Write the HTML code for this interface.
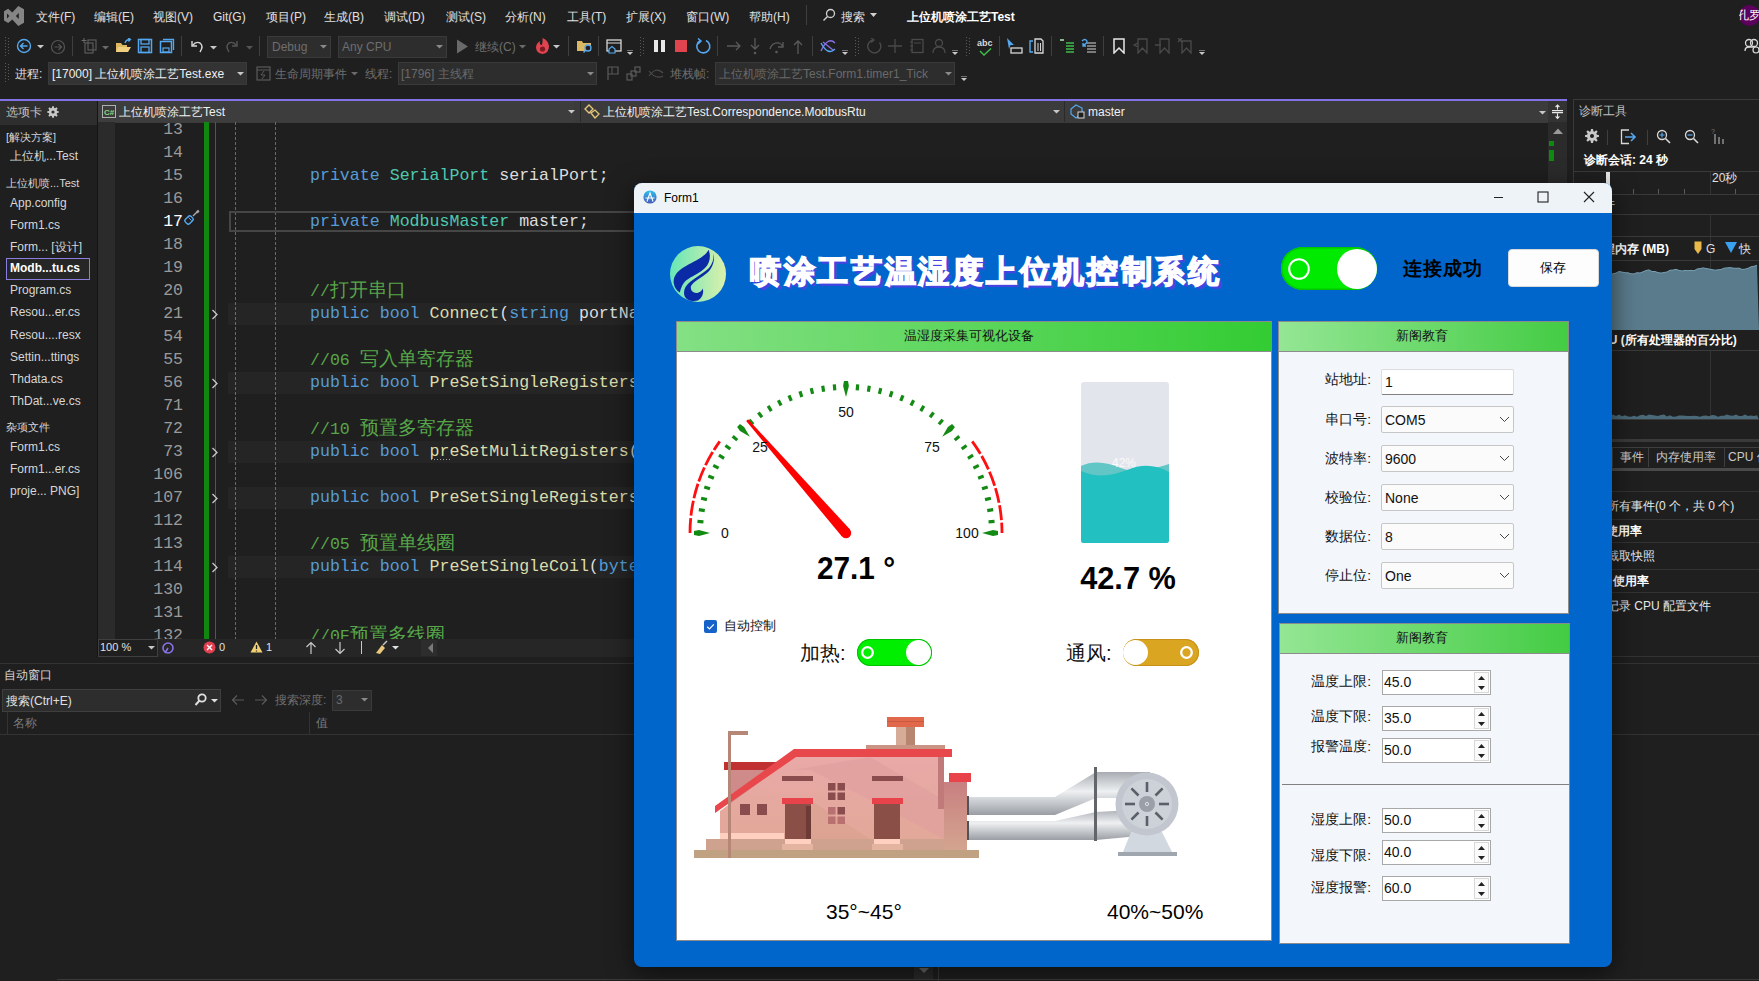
<!DOCTYPE html><html><head><meta charset="utf-8"><style>
html,body{margin:0;padding:0;}
body{width:1759px;height:981px;overflow:hidden;position:relative;background:#1f1f1f;font-family:"Liberation Sans",sans-serif;}
.t{position:absolute;white-space:nowrap;}
.m{font-family:"Liberation Mono",monospace;}
.cj{font-size:18.7px;}
</style></head><body>
<svg style="position:absolute;left:0px;top:0px;" width="28" height="30" viewBox="0 0 28 30"><path d="M4 11.3 L8.2 8.8 L12.3 12.6 L18.3 5.9 L24 9.2 V22.8 L18.3 26.1 L12.3 19.6 L8.2 23 L4 20.5 Z M7 13.6 V18.4 L9.3 16 Z M18.8 13 L15.9 16 L18.8 19 Z" fill="#858585" fill-rule="evenodd"/></svg>
<div class="t " style="left:36px;top:9.6px;font-size:12px;line-height:14.4px;color:#e0e0e0;font-weight:normal;">文件(F)</div>
<div class="t " style="left:94px;top:9.6px;font-size:12px;line-height:14.4px;color:#e0e0e0;font-weight:normal;">编辑(E)</div>
<div class="t " style="left:153px;top:9.6px;font-size:12px;line-height:14.4px;color:#e0e0e0;font-weight:normal;">视图(V)</div>
<div class="t " style="left:213px;top:9.6px;font-size:12px;line-height:14.4px;color:#e0e0e0;font-weight:normal;">Git(G)</div>
<div class="t " style="left:266px;top:9.6px;font-size:12px;line-height:14.4px;color:#e0e0e0;font-weight:normal;">项目(P)</div>
<div class="t " style="left:324px;top:9.6px;font-size:12px;line-height:14.4px;color:#e0e0e0;font-weight:normal;">生成(B)</div>
<div class="t " style="left:384px;top:9.6px;font-size:12px;line-height:14.4px;color:#e0e0e0;font-weight:normal;">调试(D)</div>
<div class="t " style="left:446px;top:9.6px;font-size:12px;line-height:14.4px;color:#e0e0e0;font-weight:normal;">测试(S)</div>
<div class="t " style="left:505px;top:9.6px;font-size:12px;line-height:14.4px;color:#e0e0e0;font-weight:normal;">分析(N)</div>
<div class="t " style="left:567px;top:9.6px;font-size:12px;line-height:14.4px;color:#e0e0e0;font-weight:normal;">工具(T)</div>
<div class="t " style="left:626px;top:9.6px;font-size:12px;line-height:14.4px;color:#e0e0e0;font-weight:normal;">扩展(X)</div>
<div class="t " style="left:686px;top:9.6px;font-size:12px;line-height:14.4px;color:#e0e0e0;font-weight:normal;">窗口(W)</div>
<div class="t " style="left:749px;top:9.6px;font-size:12px;line-height:14.4px;color:#e0e0e0;font-weight:normal;">帮助(H)</div>
<div style="position:absolute;left:806px;top:5px;width:1px;height:20px;background:#3f3f3f"></div>
<svg style="position:absolute;left:822px;top:8px;" width="14" height="14" viewBox="0 0 14 14"><circle cx="8.5" cy="5.5" r="4" fill="none" stroke="#d0d0d0" stroke-width="1.3"/><path d="M5.5 8.5 L1.5 12.5" stroke="#d0d0d0" stroke-width="1.5"/></svg>
<div class="t " style="left:841px;top:9.6px;font-size:12px;line-height:14.4px;color:#e0e0e0;font-weight:normal;">搜索</div>
<svg style="position:absolute;left:870px;top:13px;" width="8" height="5" viewBox="0 0 8 5"><path d="M0 0 H7 L3.5 4 Z" fill="#d0d0d0"/></svg>
<div class="t " style="left:907px;top:9.6px;font-size:12px;line-height:14.4px;color:#ffffff;font-weight:bold;">上位机喷涂工艺Test</div>
<div style="position:absolute;left:1739px;top:5px;width:21px;height:21px;border-radius:50%;background:#5c005e;overflow:hidden"><div class="t" style="left:-2px;top:2px;font-size:12px;line-height:16px;color:#fff">孔罗</div></div>
<svg style="position:absolute;left:5px;top:37px;" width="5" height="19" viewBox="0 0 5 19"><rect x="0" y="0" width="1" height="1" fill="#5a5a5a"/><rect x="3" y="1" width="1" height="1" fill="#5a5a5a"/><rect x="0" y="3" width="1" height="1" fill="#5a5a5a"/><rect x="3" y="4" width="1" height="1" fill="#5a5a5a"/><rect x="0" y="6" width="1" height="1" fill="#5a5a5a"/><rect x="3" y="7" width="1" height="1" fill="#5a5a5a"/><rect x="0" y="9" width="1" height="1" fill="#5a5a5a"/><rect x="3" y="10" width="1" height="1" fill="#5a5a5a"/><rect x="0" y="12" width="1" height="1" fill="#5a5a5a"/><rect x="3" y="13" width="1" height="1" fill="#5a5a5a"/><rect x="0" y="15" width="1" height="1" fill="#5a5a5a"/><rect x="3" y="16" width="1" height="1" fill="#5a5a5a"/><rect x="0" y="18" width="1" height="1" fill="#5a5a5a"/><rect x="3" y="19" width="1" height="1" fill="#5a5a5a"/></svg>
<svg style="position:absolute;left:16px;top:38px;" width="16" height="16" viewBox="0 0 16 16"><circle cx="8" cy="8" r="6.5" fill="none" stroke="#55a8f0" stroke-width="1.4"/><path d="M11.5 8 H4.5 M7.5 5 L4.5 8 L7.5 11" fill="none" stroke="#55a8f0" stroke-width="1.4"/></svg>
<svg style="position:absolute;left:37px;top:45px;" width="8" height="5" viewBox="0 0 8 5"><path d="M0 0 H7 L3.5 3.5 Z" fill="#c8c8c8"/></svg>
<svg style="position:absolute;left:50px;top:39px;" width="16" height="16" viewBox="0 0 16 16"><circle cx="8" cy="8" r="6.5" fill="none" stroke="#555" stroke-width="1.2"/><path d="M4.5 8 H11.5 M8.5 5 L11.5 8 L8.5 11" fill="none" stroke="#555" stroke-width="1.2"/></svg>
<div style="position:absolute;left:72px;top:36px;width:1px;height:20px;background:#3f3f3f"></div>
<svg style="position:absolute;left:81px;top:37px;" width="18" height="18" viewBox="0 0 18 18"><rect x="4" y="6" width="8" height="10" fill="none" stroke="#5a5a5a" stroke-width="1.2"/><rect x="7" y="3" width="8" height="10" fill="none" stroke="#5a5a5a" stroke-width="1.2"/><path d="M3 1 V6 M0.5 3.5 H5.5" stroke="#6a6a6a"/></svg>
<svg style="position:absolute;left:102px;top:46px;" width="8" height="5" viewBox="0 0 8 5"><path d="M0 0 H7 L3.5 3.5 Z" fill="#6a6a6a"/></svg>
<svg style="position:absolute;left:115px;top:38px;" width="17" height="16" viewBox="0 0 17 16"><path d="M1 5 H6 L7.5 7 H12 V14 H1 Z" fill="#dcb862"/><path d="M3 9 H16 L13 14 H1 Z" fill="#f0cf80"/><path d="M10 5 Q11 1.5 15 1.5 M13 0 L15.5 1.5 L13.5 3.5" fill="none" stroke="#55a8f0" stroke-width="1.3"/></svg>
<svg style="position:absolute;left:137px;top:38px;" width="16" height="16" viewBox="0 0 16 16"><rect x="1.5" y="1.5" width="13" height="13" fill="none" stroke="#55a8f0" stroke-width="1.5"/><rect x="4" y="1.5" width="8" height="4.5" fill="none" stroke="#55a8f0" stroke-width="1.3"/><rect x="4" y="9" width="8" height="5.5" fill="none" stroke="#55a8f0" stroke-width="1.3"/></svg>
<svg style="position:absolute;left:159px;top:38px;" width="16" height="16" viewBox="0 0 16 16"><rect x="1.5" y="3.5" width="11" height="11" fill="none" stroke="#55a8f0" stroke-width="1.5"/><path d="M4 1.5 H14.5 V12" fill="none" stroke="#55a8f0" stroke-width="1.3"/><rect x="4" y="10" width="6" height="4" fill="none" stroke="#55a8f0" stroke-width="1.2"/></svg>
<div style="position:absolute;left:181px;top:36px;width:1px;height:20px;background:#3f3f3f"></div>
<svg style="position:absolute;left:189px;top:38px;" width="16" height="16" viewBox="0 0 16 16"><path d="M3 3 V8 H8" fill="none" stroke="#d8d8d8" stroke-width="1.4"/><path d="M3.5 7.5 Q7 3 11 5 Q15 8 11 14" fill="none" stroke="#d8d8d8" stroke-width="1.4"/></svg>
<svg style="position:absolute;left:210px;top:46px;" width="8" height="5" viewBox="0 0 8 5"><path d="M0 0 H7 L3.5 3.5 Z" fill="#c8c8c8"/></svg>
<svg style="position:absolute;left:224px;top:38px;" width="16" height="16" viewBox="0 0 16 16"><path d="M13 3 V8 H8" fill="none" stroke="#555" stroke-width="1.4"/><path d="M12.5 7.5 Q9 3 5 5 Q1 8 5 14" fill="none" stroke="#555" stroke-width="1.4"/></svg>
<svg style="position:absolute;left:246px;top:46px;" width="8" height="5" viewBox="0 0 8 5"><path d="M0 0 H7 L3.5 3.5 Z" fill="#555"/></svg>
<div style="position:absolute;left:259px;top:36px;width:1px;height:20px;background:#3f3f3f"></div>
<div style="position:absolute;left:267px;top:36px;width:64px;height:22px;background:#2d2d2d;border:1px solid #3a3a3a;box-sizing:border-box"></div>
<div class="t " style="left:272px;top:39.8px;font-size:12px;line-height:14.4px;color:#6e6e6e;font-weight:normal;">Debug</div>
<svg style="position:absolute;left:320px;top:45px;" width="8" height="5" viewBox="0 0 8 5"><path d="M0 0 H7 L3.5 3.5 Z" fill="#8a8a8a"/></svg>
<div style="position:absolute;left:338px;top:36px;width:109px;height:22px;background:#2d2d2d;border:1px solid #3a3a3a;box-sizing:border-box"></div>
<div class="t " style="left:342px;top:39.8px;font-size:12px;line-height:14.4px;color:#6e6e6e;font-weight:normal;">Any CPU</div>
<svg style="position:absolute;left:436px;top:45px;" width="8" height="5" viewBox="0 0 8 5"><path d="M0 0 H7 L3.5 3.5 Z" fill="#8a8a8a"/></svg>
<svg style="position:absolute;left:456px;top:39px;" width="14" height="15" viewBox="0 0 14 15"><path d="M1 0.5 L12 7.5 L1 14.5 Z" fill="#6a6a6a"/></svg>
<div class="t " style="left:475px;top:39.8px;font-size:12px;line-height:14.4px;color:#6e6e6e;font-weight:normal;">继续(C)</div>
<svg style="position:absolute;left:519px;top:45px;" width="8" height="5" viewBox="0 0 8 5"><path d="M0 0 H7 L3.5 3.5 Z" fill="#6a6a6a"/></svg>
<svg style="position:absolute;left:534px;top:37px;" width="17" height="18" viewBox="0 0 17 18"><path d="M8.5 1 Q14 3 15 9 Q15 16 8.5 17 Q2 16 2 10 Q2.5 6 6 4 Q5 8 8 8 Q9 4 8.5 1 Z" fill="#e0454f"/><circle cx="8.5" cy="12" r="2.6" fill="#7a1a22"/></svg>
<svg style="position:absolute;left:553px;top:45px;" width="8" height="5" viewBox="0 0 8 5"><path d="M0 0 H7 L3.5 3.5 Z" fill="#c8c8c8"/></svg>
<div style="position:absolute;left:568px;top:36px;width:1px;height:20px;background:#3f3f3f"></div>
<svg style="position:absolute;left:576px;top:38px;" width="17" height="16" viewBox="0 0 17 16"><path d="M1 3 H6 L7 5 H15 V13 H1 Z" fill="#dcb862"/><circle cx="12" cy="10" r="3" fill="#1f1f1f" stroke="#55a8f0" stroke-width="1.3"/><path d="M10 12 L7.5 14.5" stroke="#55a8f0" stroke-width="1.5"/></svg>
<div style="position:absolute;left:598px;top:36px;width:1px;height:20px;background:#3f3f3f"></div>
<svg style="position:absolute;left:606px;top:38px;" width="16" height="16" viewBox="0 0 16 16"><rect x="1" y="2" width="14" height="11" fill="none" stroke="#d8d8d8" stroke-width="1.3"/><path d="M1 5 H15" stroke="#d8d8d8"/><path d="M3 15 V11 L6 8.5 L9 11 V15 Z" fill="#1f1f1f" stroke="#55a8f0" stroke-width="1.2"/></svg>
<svg style="position:absolute;left:627px;top:50px;" width="7" height="6" viewBox="0 0 7 6"><path d="M0 0 H6" stroke="#c8c8c8"/><path d="M0 2 H6 L3 5 Z" fill="#c8c8c8"/></svg>
<svg style="position:absolute;left:640px;top:37px;" width="5" height="19" viewBox="0 0 5 19"><rect x="0" y="0" width="1" height="1" fill="#5a5a5a"/><rect x="3" y="1" width="1" height="1" fill="#5a5a5a"/><rect x="0" y="3" width="1" height="1" fill="#5a5a5a"/><rect x="3" y="4" width="1" height="1" fill="#5a5a5a"/><rect x="0" y="6" width="1" height="1" fill="#5a5a5a"/><rect x="3" y="7" width="1" height="1" fill="#5a5a5a"/><rect x="0" y="9" width="1" height="1" fill="#5a5a5a"/><rect x="3" y="10" width="1" height="1" fill="#5a5a5a"/><rect x="0" y="12" width="1" height="1" fill="#5a5a5a"/><rect x="3" y="13" width="1" height="1" fill="#5a5a5a"/><rect x="0" y="15" width="1" height="1" fill="#5a5a5a"/><rect x="3" y="16" width="1" height="1" fill="#5a5a5a"/><rect x="0" y="18" width="1" height="1" fill="#5a5a5a"/><rect x="3" y="19" width="1" height="1" fill="#5a5a5a"/></svg>
<div style="position:absolute;left:654px;top:40px;width:4px;height:12px;background:#e8e8e8"></div>
<div style="position:absolute;left:661px;top:40px;width:4px;height:12px;background:#e8e8e8"></div>
<div style="position:absolute;left:675px;top:40px;width:12px;height:12px;background:#e0454f"></div>
<svg style="position:absolute;left:695px;top:38px;" width="17" height="16" viewBox="0 0 17 16"><path d="M11 2.5 A6.5 6.5 0 1 1 5 2.8" fill="none" stroke="#55a8f0" stroke-width="1.6"/><path d="M3 0.5 L6 3 L3 6" fill="none" stroke="#55a8f0" stroke-width="1.5"/></svg>
<div style="position:absolute;left:717px;top:36px;width:1px;height:20px;background:#3f3f3f"></div>
<svg style="position:absolute;left:726px;top:39px;" width="16" height="14" viewBox="0 0 16 14"><path d="M1 7 H14 M10 3 L14 7 L10 11" fill="none" stroke="#5a5a5a" stroke-width="1.3"/></svg>
<svg style="position:absolute;left:748px;top:37px;" width="14" height="18" viewBox="0 0 14 18"><path d="M7 1 V12 M3 8 L7 12 L11 8" fill="none" stroke="#5a5a5a" stroke-width="1.3"/><circle cx="7" cy="16" r="1.3" fill="#5a5a5a"/></svg>
<svg style="position:absolute;left:768px;top:39px;" width="18" height="16" viewBox="0 0 18 16"><path d="M2 10 Q4 3 11 4 Q14 5 15 8 M15 3 V8 H10" fill="none" stroke="#5a5a5a" stroke-width="1.3"/><circle cx="8.5" cy="13" r="1.3" fill="#5a5a5a"/></svg>
<svg style="position:absolute;left:791px;top:37px;" width="14" height="18" viewBox="0 0 14 18"><path d="M7 17 V4 M3 8 L7 4 L11 8" fill="none" stroke="#5a5a5a" stroke-width="1.3"/></svg>
<div style="position:absolute;left:812px;top:36px;width:1px;height:20px;background:#3f3f3f"></div>
<svg style="position:absolute;left:819px;top:38px;" width="18" height="16" viewBox="0 0 18 16"><path d="M2 13 Q9 -2 16 5" fill="none" stroke="#8a72e8" stroke-width="1.4"/><path d="M2 5 Q9 18 16 11" fill="none" stroke="#55a8f0" stroke-width="1.4"/><path d="M4 4 L14 12" stroke="#8a72e8" stroke-width="1.2"/></svg>
<svg style="position:absolute;left:842px;top:50px;" width="7" height="6" viewBox="0 0 7 6"><path d="M0 0 H6" stroke="#c8c8c8"/><path d="M0 2 H6 L3 5 Z" fill="#c8c8c8"/></svg>
<svg style="position:absolute;left:855px;top:37px;" width="5" height="19" viewBox="0 0 5 19"><rect x="0" y="0" width="1" height="1" fill="#5a5a5a"/><rect x="3" y="1" width="1" height="1" fill="#5a5a5a"/><rect x="0" y="3" width="1" height="1" fill="#5a5a5a"/><rect x="3" y="4" width="1" height="1" fill="#5a5a5a"/><rect x="0" y="6" width="1" height="1" fill="#5a5a5a"/><rect x="3" y="7" width="1" height="1" fill="#5a5a5a"/><rect x="0" y="9" width="1" height="1" fill="#5a5a5a"/><rect x="3" y="10" width="1" height="1" fill="#5a5a5a"/><rect x="0" y="12" width="1" height="1" fill="#5a5a5a"/><rect x="3" y="13" width="1" height="1" fill="#5a5a5a"/><rect x="0" y="15" width="1" height="1" fill="#5a5a5a"/><rect x="3" y="16" width="1" height="1" fill="#5a5a5a"/><rect x="0" y="18" width="1" height="1" fill="#5a5a5a"/><rect x="3" y="19" width="1" height="1" fill="#5a5a5a"/></svg>
<svg style="position:absolute;left:865px;top:38px;" width="17" height="17" viewBox="0 0 17 17"><path d="M14.5 4.5 A6.5 6.5 0 1 1 8 2" fill="none" stroke="#4a4a4a" stroke-width="1.4"/><path d="M6 0 L9 2 L6 4.5" fill="none" stroke="#4a4a4a" stroke-width="1.3"/></svg>
<svg style="position:absolute;left:887px;top:38px;" width="16" height="16" viewBox="0 0 16 16"><path d="M8 1 V15 M1 8 H15" stroke="#4a4a4a" stroke-width="1.3"/></svg>
<svg style="position:absolute;left:910px;top:38px;" width="15" height="16" viewBox="0 0 15 16"><rect x="2" y="1.5" width="11" height="13" fill="none" stroke="#4a4a4a" stroke-width="1.3"/><path d="M4 5 H11 M0 4 H3 M0 8 H3 M0 12 H3" stroke="#4a4a4a"/></svg>
<svg style="position:absolute;left:932px;top:38px;" width="14" height="16" viewBox="0 0 14 16"><circle cx="7" cy="5" r="3.5" fill="none" stroke="#4a4a4a" stroke-width="1.3"/><path d="M1 15 Q1 9 7 9 Q13 9 13 15" fill="none" stroke="#4a4a4a" stroke-width="1.3"/></svg>
<svg style="position:absolute;left:952px;top:50px;" width="7" height="6" viewBox="0 0 7 6"><path d="M0 0 H6" stroke="#c8c8c8"/><path d="M0 2 H6 L3 5 Z" fill="#c8c8c8"/></svg>
<svg style="position:absolute;left:966px;top:37px;" width="5" height="19" viewBox="0 0 5 19"><rect x="0" y="0" width="1" height="1" fill="#5a5a5a"/><rect x="3" y="1" width="1" height="1" fill="#5a5a5a"/><rect x="0" y="3" width="1" height="1" fill="#5a5a5a"/><rect x="3" y="4" width="1" height="1" fill="#5a5a5a"/><rect x="0" y="6" width="1" height="1" fill="#5a5a5a"/><rect x="3" y="7" width="1" height="1" fill="#5a5a5a"/><rect x="0" y="9" width="1" height="1" fill="#5a5a5a"/><rect x="3" y="10" width="1" height="1" fill="#5a5a5a"/><rect x="0" y="12" width="1" height="1" fill="#5a5a5a"/><rect x="3" y="13" width="1" height="1" fill="#5a5a5a"/><rect x="0" y="15" width="1" height="1" fill="#5a5a5a"/><rect x="3" y="16" width="1" height="1" fill="#5a5a5a"/><rect x="0" y="18" width="1" height="1" fill="#5a5a5a"/><rect x="3" y="19" width="1" height="1" fill="#5a5a5a"/></svg>
<div class="t " style="left:977px;top:37.6px;font-size:9px;line-height:10.8px;color:#d8d8d8;font-weight:bold;">abc</div>
<svg style="position:absolute;left:979px;top:48px;" width="14" height="8" viewBox="0 0 14 8"><path d="M1 3 L5 7 L12 0.5" fill="none" stroke="#3fba4a" stroke-width="1.5"/></svg>
<div style="position:absolute;left:999px;top:36px;width:1px;height:20px;background:#3f3f3f"></div>
<svg style="position:absolute;left:1006px;top:38px;" width="18" height="16" viewBox="0 0 18 16"><path d="M1 0 L8 7 H4.5 L3 11 Z" fill="#55a8f0"/><rect x="5" y="10" width="11" height="5" fill="none" stroke="#d8d8d8" stroke-width="1.3"/></svg>
<svg style="position:absolute;left:1028px;top:38px;" width="17" height="16" viewBox="0 0 17 16"><path d="M5 3 H2 V14 H5" fill="none" stroke="#55a8f0" stroke-width="1.4"/><path d="M7 1 H13 L15 3 V15 H7 Z" fill="none" stroke="#d8d8d8" stroke-width="1.3"/><path d="M10 5 V13 M12.5 5 V13" stroke="#d8d8d8"/></svg>
<div style="position:absolute;left:1051px;top:36px;width:1px;height:20px;background:#3f3f3f"></div>
<svg style="position:absolute;left:1059px;top:38px;" width="16" height="16" viewBox="0 0 16 16"><path d="M1 2 H5 M7 5 H15 M7 8 H15 M7 11 H15 M7 14 H15" stroke="#3fba4a" stroke-width="1.3"/><path d="M1 2 H5" stroke="#d8d8d8"/></svg>
<svg style="position:absolute;left:1080px;top:38px;" width="17" height="16" viewBox="0 0 17 16"><path d="M7 5 H16 M7 8 H16 M7 11 H16 M7 14 H16" stroke="#d8d8d8" stroke-width="1.2"/><path d="M2 3 Q5 0 7 3 Q7 6 3 7 M3 5 V8 H6" fill="none" stroke="#55a8f0" stroke-width="1.3"/></svg>
<div style="position:absolute;left:1103px;top:36px;width:1px;height:20px;background:#3f3f3f"></div>
<svg style="position:absolute;left:1112px;top:38px;" width="14" height="16" viewBox="0 0 14 16"><path d="M2 1 H12 V15 L7 10 L2 15 Z" fill="none" stroke="#e8e8e8" stroke-width="1.5"/></svg>
<svg style="position:absolute;left:1133px;top:38px;" width="16" height="16" viewBox="0 0 16 16"><path d="M5 1 H14 V15 L9.5 10 L5 15 Z M1 7 L5 5 V9 Z" fill="none" stroke="#4a4a4a" stroke-width="1.3"/></svg>
<svg style="position:absolute;left:1155px;top:38px;" width="16" height="16" viewBox="0 0 16 16"><path d="M5 1 H14 V15 L9.5 10 L5 15 Z M0 7 H6" fill="none" stroke="#4a4a4a" stroke-width="1.3"/></svg>
<svg style="position:absolute;left:1177px;top:38px;" width="16" height="16" viewBox="0 0 16 16"><path d="M5 3 H14 V15 L9.5 10 L5 15 Z M1 0 L5 4 M5 0 L1 4" fill="none" stroke="#4a4a4a" stroke-width="1.3"/></svg>
<svg style="position:absolute;left:1199px;top:50px;" width="7" height="6" viewBox="0 0 7 6"><path d="M0 0 H6" stroke="#c8c8c8"/><path d="M0 2 H6 L3 5 Z" fill="#c8c8c8"/></svg>
<svg style="position:absolute;left:1744px;top:38px;" width="15" height="16" viewBox="0 0 15 16"><circle cx="5" cy="5" r="3.5" fill="none" stroke="#d8d8d8" stroke-width="1.3"/><circle cx="10" cy="5" r="3.5" fill="none" stroke="#d8d8d8" stroke-width="1.3"/><path d="M1 13 Q1 9 5 9 H10 Q14 9 14 13" fill="none" stroke="#d8d8d8" stroke-width="1.3"/><circle cx="12" cy="12" r="3" fill="#1f1f1f" stroke="#d8d8d8" stroke-width="1.2"/></svg>
<svg style="position:absolute;left:5px;top:63px;" width="5" height="19" viewBox="0 0 5 19"><rect x="0" y="0" width="1" height="1" fill="#5a5a5a"/><rect x="3" y="1" width="1" height="1" fill="#5a5a5a"/><rect x="0" y="3" width="1" height="1" fill="#5a5a5a"/><rect x="3" y="4" width="1" height="1" fill="#5a5a5a"/><rect x="0" y="6" width="1" height="1" fill="#5a5a5a"/><rect x="3" y="7" width="1" height="1" fill="#5a5a5a"/><rect x="0" y="9" width="1" height="1" fill="#5a5a5a"/><rect x="3" y="10" width="1" height="1" fill="#5a5a5a"/><rect x="0" y="12" width="1" height="1" fill="#5a5a5a"/><rect x="3" y="13" width="1" height="1" fill="#5a5a5a"/><rect x="0" y="15" width="1" height="1" fill="#5a5a5a"/><rect x="3" y="16" width="1" height="1" fill="#5a5a5a"/><rect x="0" y="18" width="1" height="1" fill="#5a5a5a"/><rect x="3" y="19" width="1" height="1" fill="#5a5a5a"/></svg>
<div class="t " style="left:15px;top:66.8px;font-size:12px;line-height:14.4px;color:#e0e0e0;font-weight:normal;">进程:</div>
<div style="position:absolute;left:48px;top:62px;width:199px;height:23px;background:#333333;border:1px solid #3a3a3a;box-sizing:border-box"></div>
<div class="t " style="left:52px;top:66.8px;font-size:12px;line-height:14.4px;color:#f0f0f0;font-weight:normal;">[17000] 上位机喷涂工艺Test.exe</div>
<svg style="position:absolute;left:237px;top:72px;" width="8" height="5" viewBox="0 0 8 5"><path d="M0 0 H7 L3.5 3.5 Z" fill="#c8c8c8"/></svg>
<svg style="position:absolute;left:256px;top:66px;" width="15" height="15" viewBox="0 0 15 15"><rect x="1" y="1" width="13" height="13" fill="none" stroke="#5a5a5a" stroke-width="1.2"/><path d="M1 4 H14 M8 5 L5 9 H9 L6 13" fill="none" stroke="#5a5a5a"/></svg>
<div class="t " style="left:275px;top:66.8px;font-size:12px;line-height:14.4px;color:#6e6e6e;font-weight:normal;">生命周期事件</div>
<svg style="position:absolute;left:351px;top:72px;" width="8" height="5" viewBox="0 0 8 5"><path d="M0 0 H7 L3.5 3.5 Z" fill="#6a6a6a"/></svg>
<div class="t " style="left:365px;top:66.8px;font-size:12px;line-height:14.4px;color:#6e6e6e;font-weight:normal;">线程:</div>
<div style="position:absolute;left:398px;top:62px;width:199px;height:23px;background:#2d2d2d;border:1px solid #3a3a3a;box-sizing:border-box"></div>
<div class="t " style="left:401px;top:66.8px;font-size:12px;line-height:14.4px;color:#6a6a6a;font-weight:normal;">[1796] 主线程</div>
<svg style="position:absolute;left:587px;top:72px;" width="8" height="5" viewBox="0 0 8 5"><path d="M0 0 H7 L3.5 3.5 Z" fill="#8a8a8a"/></svg>
<svg style="position:absolute;left:606px;top:66px;" width="14" height="15" viewBox="0 0 14 15"><path d="M2 14 V1 H12 V8 H2" fill="none" stroke="#5a5a5a" stroke-width="1.2"/><path d="M6 1 V8" stroke="#5a5a5a"/></svg>
<svg style="position:absolute;left:626px;top:66px;" width="15" height="15" viewBox="0 0 15 15"><rect x="1" y="8" width="5" height="6" fill="none" stroke="#5a5a5a" stroke-width="1.2"/><rect x="5" y="5" width="5" height="5" fill="none" stroke="#5a5a5a" stroke-width="1.2"/><rect x="9" y="1" width="5" height="5" fill="none" stroke="#5a5a5a" stroke-width="1.2"/></svg>
<svg style="position:absolute;left:648px;top:68px;" width="16" height="11" viewBox="0 0 16 11"><path d="M1 8 Q8 -2 15 5 M1 3 Q8 12 15 8" fill="none" stroke="#4a4a4a" stroke-width="1.2"/></svg>
<div class="t " style="left:670px;top:66.8px;font-size:12px;line-height:14.4px;color:#6e6e6e;font-weight:normal;">堆栈帧:</div>
<div style="position:absolute;left:715px;top:62px;width:240px;height:23px;background:#2d2d2d;border:1px solid #3a3a3a;box-sizing:border-box"></div>
<div class="t " style="left:719px;top:66.8px;font-size:12px;line-height:14.4px;color:#6a6a6a;font-weight:normal;">上位机喷涂工艺Test.Form1.timer1_Tick</div>
<svg style="position:absolute;left:945px;top:72px;" width="8" height="5" viewBox="0 0 8 5"><path d="M0 0 H7 L3.5 3.5 Z" fill="#8a8a8a"/></svg>
<svg style="position:absolute;left:961px;top:76px;" width="7" height="6" viewBox="0 0 7 6"><path d="M0 0 H6" stroke="#c8c8c8"/><path d="M0 2 H6 L3 5 Z" fill="#c8c8c8"/></svg>
<div style="position:absolute;left:0px;top:99px;width:1567px;height:2px;background:#8272e8"></div>
<div style="position:absolute;left:0px;top:101px;width:97px;height:24px;background:#2e2e2e"></div>
<div class="t " style="left:6px;top:104.8px;font-size:12px;line-height:14.4px;color:#c0c0c0;font-weight:normal;">选项卡</div>
<svg style="position:absolute;left:47px;top:106px;" width="12" height="12" viewBox="0 0 12 12"><polygon points="10.05,4.88 11.73,5.13 11.73,6.87 10.05,7.12 9.65,8.07 10.67,9.44 9.44,10.67 8.07,9.65 7.12,10.05 6.87,11.73 5.13,11.73 4.88,10.05 3.93,9.65 2.56,10.67 1.33,9.44 2.35,8.07 1.95,7.12 0.27,6.87 0.27,5.13 1.95,4.88 2.35,3.93 1.33,2.56 2.56,1.33 3.93,2.35 4.88,1.95 5.13,0.27 6.87,0.27 7.12,1.95 8.07,2.35 9.44,1.33 10.67,2.56 9.65,3.93" fill="#c8c8c8"/><circle cx="6" cy="6" r="1.6" fill="#2e2e2e"/></svg>
<div style="position:absolute;left:97px;top:101px;width:1px;height:556px;background:#141414"></div>
<div style="position:absolute;left:6px;top:258px;width:84px;height:22px;border:1px solid #8a7ee0;background:#262626;box-sizing:border-box"></div>
<div class="t " style="left:6px;top:130.6px;font-size:11px;line-height:13.2px;color:#d6d6d6;font-weight:normal;">[解决方案]</div>
<div class="t " style="left:10px;top:149.0px;font-size:12px;line-height:14.4px;color:#d6d6d6;font-weight:normal;">上位机...Test</div>
<div class="t " style="left:6px;top:176.6px;font-size:11px;line-height:13.2px;color:#d6d6d6;font-weight:normal;">上位机喷...Test</div>
<div class="t " style="left:10px;top:196.0px;font-size:12px;line-height:14.4px;color:#d6d6d6;font-weight:normal;">App.config</div>
<div class="t " style="left:10px;top:218.0px;font-size:12px;line-height:14.4px;color:#d6d6d6;font-weight:normal;">Form1.cs</div>
<div class="t " style="left:10px;top:240.0px;font-size:12px;line-height:14.4px;color:#d6d6d6;font-weight:normal;">Form... [设计]</div>
<div class="t " style="left:10px;top:261.0px;font-size:12px;line-height:14.4px;color:#ffffff;font-weight:bold;">Modb...tu.cs</div>
<div class="t " style="left:10px;top:283.0px;font-size:12px;line-height:14.4px;color:#d6d6d6;font-weight:normal;">Program.cs</div>
<div class="t " style="left:10px;top:305.0px;font-size:12px;line-height:14.4px;color:#d6d6d6;font-weight:normal;">Resou...er.cs</div>
<div class="t " style="left:10px;top:328.0px;font-size:12px;line-height:14.4px;color:#d6d6d6;font-weight:normal;">Resou....resx</div>
<div class="t " style="left:10px;top:350.0px;font-size:12px;line-height:14.4px;color:#d6d6d6;font-weight:normal;">Settin...ttings</div>
<div class="t " style="left:10px;top:372.0px;font-size:12px;line-height:14.4px;color:#d6d6d6;font-weight:normal;">Thdata.cs</div>
<div class="t " style="left:10px;top:394.0px;font-size:12px;line-height:14.4px;color:#d6d6d6;font-weight:normal;">ThDat...ve.cs</div>
<div class="t " style="left:6px;top:420.6px;font-size:11px;line-height:13.2px;color:#d6d6d6;font-weight:normal;">杂项文件</div>
<div class="t " style="left:10px;top:440.0px;font-size:12px;line-height:14.4px;color:#d6d6d6;font-weight:normal;">Form1.cs</div>
<div class="t " style="left:10px;top:462.0px;font-size:12px;line-height:14.4px;color:#d6d6d6;font-weight:normal;">Form1...er.cs</div>
<div class="t " style="left:10px;top:484.0px;font-size:12px;line-height:14.4px;color:#d6d6d6;font-weight:normal;">proje... PNG]</div>
<div style="position:absolute;left:98px;top:101px;width:1469px;height:22px;background:#3b3b3b"></div>
<div style="position:absolute;left:98px;top:101px;width:476px;height:21px;background:#3d3d3d"></div>
<svg style="position:absolute;left:102px;top:105px;" width="14" height="13" viewBox="0 0 14 13"><rect x="0.5" y="0.5" width="13" height="12" fill="none" stroke="#b0b0b0"/><text x="2" y="10" font-size="8" fill="#8bd67a" font-family="Liberation Sans" font-weight="bold">C#</text></svg>
<div class="t " style="left:119px;top:104.8px;font-size:12px;line-height:14.4px;color:#f0f0f0;font-weight:normal;">上位机喷涂工艺Test</div>
<svg style="position:absolute;left:568px;top:110px;" width="8" height="5" viewBox="0 0 8 5"><path d="M0 0 H7 L3.5 3.5 Z" fill="#c8c8c8"/></svg>
<div style="position:absolute;left:580px;top:101px;width:1px;height:21px;background:#2a2a2a"></div>
<svg style="position:absolute;left:584px;top:104px;" width="16" height="15" viewBox="0 0 16 15"><path d="M1 5 L5 1 L9 5 L5 9 Z M7 9 L11 6 L15 10 L11 14 Z" fill="none" stroke="#e8c87a" stroke-width="1.3"/></svg>
<div class="t " style="left:603px;top:104.8px;font-size:12px;line-height:14.4px;color:#f0f0f0;font-weight:normal;">上位机喷涂工艺Test.Correspondence.ModbusRtu</div>
<svg style="position:absolute;left:1053px;top:110px;" width="8" height="5" viewBox="0 0 8 5"><path d="M0 0 H7 L3.5 3.5 Z" fill="#c8c8c8"/></svg>
<div style="position:absolute;left:1064px;top:101px;width:1px;height:21px;background:#2a2a2a"></div>
<svg style="position:absolute;left:1070px;top:104px;" width="16" height="15" viewBox="0 0 16 15"><path d="M1 5 L6 1 L12 4 V10 L6 14 L1 10 Z" fill="none" stroke="#55a8f0" stroke-width="1.2"/><rect x="8" y="8" width="6" height="6" fill="#1f1f1f" stroke="#d8d8d8"/></svg>
<div class="t " style="left:1088px;top:104.8px;font-size:12px;line-height:14.4px;color:#f0f0f0;font-weight:normal;">master</div>
<svg style="position:absolute;left:1539px;top:111px;" width="8" height="5" viewBox="0 0 8 5"><path d="M0 0 H7 L3.5 3.5 Z" fill="#c8c8c8"/></svg>
<div style="position:absolute;left:1548px;top:101px;width:19px;height:21px;background:#333333"></div>
<svg style="position:absolute;left:1550px;top:102px;" width="15" height="19" viewBox="0 0 15 19"><path d="M2 8.6 H13 M2 10.6 H13 M7.5 3 V7.6 M7.5 11.6 V16.4 M5.6 5 L7.5 3 L9.4 5 M5.6 14.4 L7.5 16.4 L9.4 14.4" fill="none" stroke="#e8e8e8" stroke-width="1.1"/></svg>
<div style="position:absolute;left:98px;top:122px;width:17px;height:517px;background:#2b2b2b"></div>
<div style="position:absolute;left:1548px;top:122px;width:19px;height:517px;background:#2b2b2b"></div>
<svg style="position:absolute;left:1553px;top:128px;" width="10" height="7" viewBox="0 0 10 7"><path d="M0 6 L5 0.5 L10 6 Z" fill="#9a9a9a"/></svg>
<div style="position:absolute;left:1549px;top:141px;width:5px;height:5px;background:#0e8a0e"></div>
<div style="position:absolute;left:1549px;top:150px;width:5px;height:11px;background:#0e8a0e"></div>
<div style="position:absolute;left:204px;top:122px;width:5px;height:517px;background:#108810"></div>
<div style="position:absolute;left:215px;top:122px;width:1px;height:517px;background:#555555"></div>
<div style="position:absolute;left:235px;top:122px;width:1px;height:517px;background:repeating-linear-gradient(#6a6a6a 0 3px, transparent 3px 5px)"></div>
<div style="position:absolute;left:275px;top:122px;width:1px;height:517px;background:repeating-linear-gradient(#6a6a6a 0 3px, transparent 3px 5px)"></div>
<div style="position:absolute;left:98px;top:122px;width:1450px;height:517px;overflow:hidden">
<div class="t m" style="right:1365px;top:-2px;font-size:16.5px;line-height:20px;color:#9a9a9a">13</div>
<div class="t m" style="right:1365px;top:21px;font-size:16.5px;line-height:20px;color:#9a9a9a">14</div>
<div class="t m" style="right:1365px;top:44px;font-size:16.5px;line-height:20px;color:#9a9a9a">15</div>
<div class="t m" style="left:212px;top:44px;font-size:16.6px;line-height:20px;color:#dcdcdc"><span style="color:#569cd6">private</span> <span style="color:#4ec9b0">SerialPort</span> serialPort;</div>
<div class="t m" style="right:1365px;top:67px;font-size:16.5px;line-height:20px;color:#9a9a9a">16</div>
<div style="position:absolute;left:131px;top:89px;width:1400px;height:21px;border:2px solid #464646;box-sizing:border-box"></div>
<div class="t m" style="right:1365px;top:90px;font-size:16.5px;line-height:20px;color:#ffffff">17</div>
<div class="t m" style="left:212px;top:90px;font-size:16.6px;line-height:20px;color:#dcdcdc"><span style="color:#569cd6">private</span> <span style="color:#4ec9b0">ModbusMaster</span> master;</div>
<div class="t m" style="right:1365px;top:113px;font-size:16.5px;line-height:20px;color:#9a9a9a">18</div>
<div class="t m" style="right:1365px;top:136px;font-size:16.5px;line-height:20px;color:#9a9a9a">19</div>
<div class="t m" style="right:1365px;top:159px;font-size:16.5px;line-height:20px;color:#9a9a9a">20</div>
<div class="t m" style="left:212px;top:159px;font-size:16.6px;line-height:20px;color:#dcdcdc"><span style="color:#57a64a">//<span class="cj">打开串口</span></span></div>
<div style="position:absolute;left:130px;top:181px;width:1400px;height:22px;background:rgba(255,255,255,0.028)"></div>
<svg style="position:absolute;left:113px;top:187px" width="8" height="11"><path d="M1.5 1 L6 5.5 L1.5 10" fill="none" stroke="#c8c8c8" stroke-width="1.3"/></svg>
<div class="t m" style="right:1365px;top:182px;font-size:16.5px;line-height:20px;color:#9a9a9a">21</div>
<div class="t m" style="left:212px;top:182px;font-size:16.6px;line-height:20px;color:#dcdcdc"><span style="color:#569cd6">public</span> <span style="color:#569cd6">bool</span> <span style="color:#dcdcaa">Connect</span>(<span style="color:#569cd6">string</span> portName</div>
<div class="t m" style="right:1365px;top:205px;font-size:16.5px;line-height:20px;color:#9a9a9a">54</div>
<div class="t m" style="right:1365px;top:228px;font-size:16.5px;line-height:20px;color:#9a9a9a">55</div>
<div class="t m" style="left:212px;top:228px;font-size:16.6px;line-height:20px;color:#dcdcdc"><span style="color:#57a64a">//06 <span class="cj">写入单寄存器</span></span></div>
<div style="position:absolute;left:130px;top:250px;width:1400px;height:22px;background:rgba(255,255,255,0.028)"></div>
<svg style="position:absolute;left:113px;top:256px" width="8" height="11"><path d="M1.5 1 L6 5.5 L1.5 10" fill="none" stroke="#c8c8c8" stroke-width="1.3"/></svg>
<div class="t m" style="right:1365px;top:251px;font-size:16.5px;line-height:20px;color:#9a9a9a">56</div>
<div class="t m" style="left:212px;top:251px;font-size:16.6px;line-height:20px;color:#dcdcdc"><span style="color:#569cd6">public</span> <span style="color:#569cd6">bool</span> <span style="color:#dcdcaa">PreSetSingleRegisters</span></div>
<div class="t m" style="right:1365px;top:274px;font-size:16.5px;line-height:20px;color:#9a9a9a">71</div>
<div class="t m" style="right:1365px;top:297px;font-size:16.5px;line-height:20px;color:#9a9a9a">72</div>
<div class="t m" style="left:212px;top:297px;font-size:16.6px;line-height:20px;color:#dcdcdc"><span style="color:#57a64a">//10 <span class="cj">预置多寄存器</span></span></div>
<div style="position:absolute;left:130px;top:319px;width:1400px;height:22px;background:rgba(255,255,255,0.028)"></div>
<svg style="position:absolute;left:113px;top:325px" width="8" height="11"><path d="M1.5 1 L6 5.5 L1.5 10" fill="none" stroke="#c8c8c8" stroke-width="1.3"/></svg>
<div class="t m" style="right:1365px;top:320px;font-size:16.5px;line-height:20px;color:#9a9a9a">73</div>
<div class="t m" style="left:212px;top:320px;font-size:16.6px;line-height:20px;color:#dcdcdc"><span style="color:#569cd6">public</span> <span style="color:#569cd6">bool</span> <span style="color:#dcdcaa">preSetMulitRegisters</span>(</div>
<div class="t m" style="right:1365px;top:343px;font-size:16.5px;line-height:20px;color:#9a9a9a">106</div>
<div style="position:absolute;left:130px;top:365px;width:1400px;height:22px;background:rgba(255,255,255,0.028)"></div>
<svg style="position:absolute;left:113px;top:371px" width="8" height="11"><path d="M1.5 1 L6 5.5 L1.5 10" fill="none" stroke="#c8c8c8" stroke-width="1.3"/></svg>
<div class="t m" style="right:1365px;top:366px;font-size:16.5px;line-height:20px;color:#9a9a9a">107</div>
<div class="t m" style="left:212px;top:366px;font-size:16.6px;line-height:20px;color:#dcdcdc"><span style="color:#569cd6">public</span> <span style="color:#569cd6">bool</span> <span style="color:#dcdcaa">PreSetSingleRegisters</span></div>
<div class="t m" style="right:1365px;top:389px;font-size:16.5px;line-height:20px;color:#9a9a9a">112</div>
<div class="t m" style="right:1365px;top:412px;font-size:16.5px;line-height:20px;color:#9a9a9a">113</div>
<div class="t m" style="left:212px;top:412px;font-size:16.6px;line-height:20px;color:#dcdcdc"><span style="color:#57a64a">//05 <span class="cj">预置单线圈</span></span></div>
<div style="position:absolute;left:130px;top:434px;width:1400px;height:22px;background:rgba(255,255,255,0.028)"></div>
<svg style="position:absolute;left:113px;top:440px" width="8" height="11"><path d="M1.5 1 L6 5.5 L1.5 10" fill="none" stroke="#c8c8c8" stroke-width="1.3"/></svg>
<div class="t m" style="right:1365px;top:435px;font-size:16.5px;line-height:20px;color:#9a9a9a">114</div>
<div class="t m" style="left:212px;top:435px;font-size:16.6px;line-height:20px;color:#dcdcdc"><span style="color:#569cd6">public</span> <span style="color:#569cd6">bool</span> <span style="color:#dcdcaa">PreSetSingleCoil</span>(<span style="color:#569cd6">byte</span></div>
<div class="t m" style="right:1365px;top:458px;font-size:16.5px;line-height:20px;color:#9a9a9a">130</div>
<div class="t m" style="right:1365px;top:481px;font-size:16.5px;line-height:20px;color:#9a9a9a">131</div>
<div class="t m" style="right:1365px;top:504px;font-size:16.5px;line-height:20px;color:#9a9a9a">132</div>
<div class="t m" style="left:212px;top:504px;font-size:16.6px;line-height:20px;color:#dcdcdc"><span style="color:#57a64a">//0F<span class="cj">预置多线圈</span></span></div>
</div>
<div style="position:absolute;left:431px;top:459px;width:20px;height:1px;background:repeating-linear-gradient(90deg,#a0a0a0 0 1px,transparent 1px 3px)"></div>
<svg style="position:absolute;left:183px;top:209px;" width="17" height="17" viewBox="0 0 17 17"><path d="M10 7 L14 3" stroke="#a8a8a8" stroke-width="1.5"/><path d="M13 2.5 L15 0.8 L16.5 2.3 L14.8 4.5 Z" fill="#a8a8a8"/><rect x="2" y="8" width="8" height="6" rx="2" transform="rotate(-45 6 11)" fill="none" stroke="#55a8f0" stroke-width="1.4"/><path d="M5.5 8.5 L8.5 11.5" stroke="#55a8f0" stroke-width="1"/></svg>
<div style="position:absolute;left:98px;top:639px;width:1469px;height:18px;background:#262626"></div>
<div style="position:absolute;left:98px;top:639px;width:60px;height:18px;background:#1f1f1f;border:1px solid #3f3f3f;box-sizing:border-box"></div>
<div class="t " style="left:100px;top:641.4px;font-size:11px;line-height:13.2px;color:#e0e0e0;font-weight:normal;">100 %</div>
<svg style="position:absolute;left:148px;top:646px;" width="8" height="5" viewBox="0 0 8 5"><path d="M0 0 H7 L3.5 3.5 Z" fill="#c8c8c8"/></svg>
<svg style="position:absolute;left:161px;top:641px;" width="14" height="14" viewBox="0 0 14 14"><circle cx="7" cy="7" r="5" fill="none" stroke="#8a72e8" stroke-width="1.6"/><path d="M4 12 L7 7" stroke="#8a72e8" stroke-width="1.5"/></svg>
<svg style="position:absolute;left:203px;top:641px;" width="13" height="13" viewBox="0 0 13 13"><circle cx="6.5" cy="6.5" r="6" fill="#e04050"/><path d="M4 4 L9 9 M9 4 L4 9" stroke="#fff" stroke-width="1.4"/></svg>
<div class="t " style="left:219px;top:641.4px;font-size:11px;line-height:13.2px;color:#e0e0e0;font-weight:normal;">0</div>
<svg style="position:absolute;left:250px;top:641px;" width="13" height="12" viewBox="0 0 13 12"><path d="M6.5 0.5 L12.5 11.5 H0.5 Z" fill="#f0d070"/><path d="M6.5 4 V8 M6.5 9.5 V10.5" stroke="#1f1f1f" stroke-width="1.3"/></svg>
<div class="t " style="left:266px;top:641.4px;font-size:11px;line-height:13.2px;color:#e0e0e0;font-weight:normal;">1</div>
<svg style="position:absolute;left:305px;top:641px;" width="12" height="14" viewBox="0 0 12 14"><path d="M6 13 V1.5 M1.5 6 L6 1.5 L10.5 6" fill="none" stroke="#c8c8c8" stroke-width="1.2"/></svg>
<svg style="position:absolute;left:334px;top:641px;" width="12" height="14" viewBox="0 0 12 14"><path d="M6 1 V12.5 M1.5 8 L6 12.5 L10.5 8" fill="none" stroke="#c8c8c8" stroke-width="1.2"/></svg>
<div style="position:absolute;left:361px;top:641px;width:1px;height:13px;background:#c8c8c8"></div>
<svg style="position:absolute;left:374px;top:640px;" width="14" height="15" viewBox="0 0 14 15"><path d="M2 13 L8 5 L11 8 L6 14 Z" fill="#e8c87a"/><path d="M9 5 L13 1" stroke="#c8c8c8" stroke-width="1.4"/></svg>
<svg style="position:absolute;left:392px;top:646px;" width="8" height="5" viewBox="0 0 8 5"><path d="M0 0 H7 L3.5 3.5 Z" fill="#e0e0e0"/></svg>
<div style="position:absolute;left:421px;top:640px;width:16px;height:16px;background:#2d2d2d"></div>
<svg style="position:absolute;left:428px;top:643px;" width="6" height="10" viewBox="0 0 6 10"><path d="M5 0 V10 L0 5 Z" fill="#7a7a7a"/></svg>
<div style="position:absolute;left:0px;top:663px;width:1567px;height:1px;background:#333333"></div>
<div class="t " style="left:4px;top:667.8px;font-size:12px;line-height:14.4px;color:#d6d6d6;font-weight:normal;">自动窗口</div>
<div style="position:absolute;left:2px;top:689px;width:219px;height:23px;background:#2d2d2d;border:1px solid #3f3f3f;box-sizing:border-box"></div>
<div class="t " style="left:6px;top:693.8px;font-size:12px;line-height:14.4px;color:#e0e0e0;font-weight:normal;">搜索(Ctrl+E)</div>
<svg style="position:absolute;left:194px;top:693px;" width="13" height="14" viewBox="0 0 13 14"><circle cx="8" cy="5" r="3.7" fill="none" stroke="#e0e0e0" stroke-width="1.8"/><path d="M5.5 7.5 L1.5 12" stroke="#e0e0e0" stroke-width="2"/></svg>
<svg style="position:absolute;left:211px;top:699px;" width="8" height="5" viewBox="0 0 8 5"><path d="M0 0 H7 L3.5 3.5 Z" fill="#e0e0e0"/></svg>
<svg style="position:absolute;left:231px;top:694px;" width="14" height="12" viewBox="0 0 14 12"><path d="M13 6 H1.5 M6 1.5 L1.5 6 L6 10.5" fill="none" stroke="#5a5a5a" stroke-width="1.2"/></svg>
<svg style="position:absolute;left:254px;top:694px;" width="14" height="12" viewBox="0 0 14 12"><path d="M1 6 H12.5 M8 1.5 L12.5 6 L8 10.5" fill="none" stroke="#5a5a5a" stroke-width="1.2"/></svg>
<div class="t " style="left:275px;top:692.8px;font-size:12px;line-height:14.4px;color:#6e6e6e;font-weight:normal;">搜索深度:</div>
<div style="position:absolute;left:332px;top:690px;width:40px;height:21px;background:#2d2d2d;border:1px solid #3a3a3a;box-sizing:border-box"></div>
<div class="t " style="left:336px;top:692.8px;font-size:12px;line-height:14.4px;color:#6a6a6a;font-weight:normal;">3</div>
<svg style="position:absolute;left:361px;top:698px;" width="8" height="5" viewBox="0 0 8 5"><path d="M0 0 H7 L3.5 3.5 Z" fill="#8a8a8a"/></svg>
<div style="position:absolute;left:7px;top:712px;width:1px;height:22px;background:#333333"></div>
<div style="position:absolute;left:309px;top:712px;width:1px;height:22px;background:#333333"></div>
<div class="t " style="left:13px;top:715.8px;font-size:12px;line-height:14.4px;color:#7a7a7a;font-weight:normal;">名称</div>
<div class="t " style="left:316px;top:715.8px;font-size:12px;line-height:14.4px;color:#7a7a7a;font-weight:normal;">值</div>
<div style="position:absolute;left:0px;top:734px;width:1567px;height:1px;background:#333333"></div>
<div style="position:absolute;left:57px;top:979px;width:1702px;height:1px;background:#3a3a3a"></div>
<div style="position:absolute;left:914px;top:965px;width:19px;height:14px;background:#2a2a2a"></div>
<svg style="position:absolute;left:919px;top:968px;" width="10" height="6" viewBox="0 0 10 6"><path d="M0 0 H10 L5 5 Z" fill="#6a6a6a"/></svg>
<div style="position:absolute;left:938px;top:965px;width:1px;height:16px;background:#3a3a3a"></div>
<div style="position:absolute;left:1573px;top:99px;width:186px;height:868px;border-left:1px solid #3a3a3a;border-top:1px solid #3a3a3a;box-sizing:border-box"></div>
<div class="t " style="left:1579px;top:103.8px;font-size:12px;line-height:14.4px;color:#c0c0c0;font-weight:normal;">诊断工具</div>
<svg style="position:absolute;left:1585px;top:129px;" width="14" height="14" viewBox="0 0 14 14"><polygon points="11.82,5.67 13.92,5.95 13.92,8.05 11.82,8.33 11.35,9.46 12.64,11.15 11.15,12.64 9.46,11.35 8.33,11.82 8.05,13.92 5.95,13.92 5.67,11.82 4.54,11.35 2.85,12.64 1.36,11.15 2.65,9.46 2.18,8.33 0.08,8.05 0.08,5.95 2.18,5.67 2.65,4.54 1.36,2.85 2.85,1.36 4.54,2.65 5.67,2.18 5.95,0.08 8.05,0.08 8.33,2.18 9.46,2.65 11.15,1.36 12.64,2.85 11.35,4.54" fill="#c8c8c8"/><circle cx="7" cy="7" r="2" fill="#1f1f1f"/></svg>
<div style="position:absolute;left:1607px;top:130px;width:1px;height:15px;background:#3f3f3f"></div>
<svg style="position:absolute;left:1620px;top:129px;" width="17" height="16" viewBox="0 0 17 16"><path d="M9 1 H1.5 V14.5 H9" fill="none" stroke="#d8d8d8" stroke-width="1.3"/><path d="M5 8 H15 M11 4 L15 8 L11 12" fill="none" stroke="#55a8f0" stroke-width="1.6"/></svg>
<div style="position:absolute;left:1647px;top:130px;width:1px;height:15px;background:#3f3f3f"></div>
<svg style="position:absolute;left:1656px;top:129px;" width="15" height="15" viewBox="0 0 15 15"><circle cx="6" cy="6" r="4.5" fill="none" stroke="#d8d8d8" stroke-width="1.3"/><path d="M9.5 9.5 L14 14" stroke="#d8d8d8" stroke-width="1.6"/><path d="M6 3.5 V8.5 M3.5 6 H8.5" stroke="#55a8f0" stroke-width="1.2"/></svg>
<svg style="position:absolute;left:1684px;top:129px;" width="15" height="15" viewBox="0 0 15 15"><circle cx="6" cy="6" r="4.5" fill="none" stroke="#d8d8d8" stroke-width="1.3"/><path d="M9.5 9.5 L14 14" stroke="#d8d8d8" stroke-width="1.6"/><path d="M3.5 6 H8.5" stroke="#55a8f0" stroke-width="1.2"/></svg>
<svg style="position:absolute;left:1711px;top:128px;" width="15" height="17" viewBox="0 0 15 17"><path d="M4 6 V16 M8 9 V16 M12 11 V16" stroke="#7a7a7a" stroke-width="1.8"/><text x="0" y="6" font-size="7" fill="#7a7a7a">?</text></svg>
<div class="t " style="left:1584px;top:152.8px;font-size:12px;line-height:14.4px;color:#ffffff;font-weight:bold;">诊断会话: 24 秒</div>
<div style="position:absolute;left:1574px;top:171px;width:185px;height:1px;background:#3a3a3a"></div>
<div style="position:absolute;left:1606px;top:172px;width:4px;height:19px;background:#e8e8e8"></div>
<div style="position:absolute;left:1710px;top:172px;width:1px;height:22px;background:#333"></div>
<div style="position:absolute;left:1710px;top:214px;width:1px;height:116px;background:#333"></div>
<div style="position:absolute;left:1710px;top:350px;width:1px;height:70px;background:#333"></div>
<div class="t " style="left:1712px;top:170.8px;font-size:12px;line-height:14.4px;color:#e0e0e0;font-weight:normal;">20秒</div>
<div style="position:absolute;left:1633px;top:189px;width:1px;height:5px;background:#5a5a5a"></div>
<div style="position:absolute;left:1658px;top:189px;width:1px;height:5px;background:#5a5a5a"></div>
<div style="position:absolute;left:1684px;top:189px;width:1px;height:5px;background:#5a5a5a"></div>
<div style="position:absolute;left:1735px;top:189px;width:1px;height:5px;background:#5a5a5a"></div>
<div style="position:absolute;left:1574px;top:194px;width:185px;height:1px;background:#3a3a3a"></div>
<div class="t " style="left:1591px;top:196.8px;font-size:12px;line-height:14.4px;color:#e0e0e0;font-weight:normal;">事件</div>
<div style="position:absolute;left:1574px;top:214px;width:185px;height:1px;background:#3a3a3a"></div>
<div style="position:absolute;left:1574px;top:236px;width:185px;height:1px;background:#3a3a3a"></div>
<div class="t " style="left:1591px;top:241.8px;font-size:12px;line-height:14.4px;color:#ffffff;font-weight:bold;">进程内存 (MB)</div>
<svg style="position:absolute;left:1694px;top:241px;" width="8" height="14" viewBox="0 0 8 14"><path d="M0.5 0.5 H7.5 V8 L4 13 L0.5 8 Z" fill="#e8b84a"/></svg>
<div class="t " style="left:1706px;top:241.8px;font-size:12px;line-height:14.4px;color:#e0e0e0;font-weight:normal;">G</div>
<svg style="position:absolute;left:1725px;top:242px;" width="12" height="11" viewBox="0 0 12 11"><path d="M0 0 H12 L6 11 Z" fill="#3aa0f0"/></svg>
<div class="t " style="left:1739px;top:241.8px;font-size:12px;line-height:14.4px;color:#e0e0e0;font-weight:normal;">快</div>
<div style="position:absolute;left:1574px;top:260px;width:185px;height:1px;background:#3a3a3a"></div>
<svg style="position:absolute;left:1574px;top:261px;" width="185" height="69" viewBox="0 0 185 69"><path d="M0 69 L0,13.8 L3,14.9 L6,14.9 L9,15.0 L12,14.2 L15,12.4 L18,11.5 L21,12.6 L24,11.9 L27,12.6 L30,14.4 L33,13.8 L36,14.1 L39,12.8 L42,12.1 L45,10.5 L48,11.1 L51,11.7 L54,11.8 L57,12.8 L60,12.9 L63,11.7 L66,12.0 L69,10.8 L72,9.5 L75,8.9 L78,10.5 L81,10.5 L84,11.6 L87,12.1 L90,11.5 L93,11.0 L96,9.2 L99,9.1 L102,8.3 L105,9.4 L108,10.0 L111,9.4 L114,9.7 L117,9.4 L120,9.8 L123,8.0 L126,7.6 L129,6.9 L132,7.5 L135,8.0 L138,8.6 L141,9.2 L144,8.8 L147,8.5 L150,7.2 L153,6.9 L156,6.6 L159,7.1 L162,7.3 L165,7.1 L168,8.4 L171,8.2 L174,7.3 L177,5.8 L180,5.3 L183,4.3 L185 69 Z" fill="#5a7b8c"/><path d="M0,13.8 L3,14.9 L6,14.9 L9,15.0 L12,14.2 L15,12.4 L18,11.5 L21,12.6 L24,11.9 L27,12.6 L30,14.4 L33,13.8 L36,14.1 L39,12.8 L42,12.1 L45,10.5 L48,11.1 L51,11.7 L54,11.8 L57,12.8 L60,12.9 L63,11.7 L66,12.0 L69,10.8 L72,9.5 L75,8.9 L78,10.5 L81,10.5 L84,11.6 L87,12.1 L90,11.5 L93,11.0 L96,9.2 L99,9.1 L102,8.3 L105,9.4 L108,10.0 L111,9.4 L114,9.7 L117,9.4 L120,9.8 L123,8.0 L126,7.6 L129,6.9 L132,7.5 L135,8.0 L138,8.6 L141,9.2 L144,8.8 L147,8.5 L150,7.2 L153,6.9 L156,6.6 L159,7.1 L162,7.3 L165,7.1 L168,8.4 L171,8.2 L174,7.3 L177,5.8 L180,5.3 L183,4.3" fill="none" stroke="#78a0b4" stroke-width="1"/></svg>
<div class="t " style="left:1592px;top:332.8px;font-size:12px;line-height:14.4px;color:#ffffff;font-weight:bold;">CPU (所有处理器的百分比)</div>
<div style="position:absolute;left:1574px;top:350px;width:185px;height:1px;background:#3a3a3a"></div>
<svg style="position:absolute;left:1574px;top:350px;" width="185" height="70" viewBox="0 0 185 70"><path d="M0 70 L0,66.4 L3,65.8 L6,65.2 L9,64.6 L12,66.5 L15,66.8 L18,64.7 L21,66.3 L24,65.4 L27,64.8 L30,65.2 L33,66.3 L36,66.5 L39,64.6 L42,65.9 L45,64.6 L48,66.2 L51,65.3 L54,66.5 L57,66.8 L60,65.7 L63,66.8 L66,65.2 L69,64.7 L72,65.9 L75,64.6 L78,65.0 L81,65.4 L84,65.9 L87,64.9 L90,64.6 L93,66.5 L96,65.2 L99,66.7 L102,66.6 L105,65.4 L108,65.6 L111,65.7 L114,66.0 L117,65.9 L120,65.8 L123,65.9 L126,66.7 L129,65.7 L132,65.5 L135,66.2 L138,65.0 L141,65.2 L144,66.7 L147,65.7 L150,65.8 L153,64.5 L156,65.5 L159,65.8 L162,64.5 L165,65.9 L168,66.0 L171,64.6 L174,65.9 L177,65.6 L180,66.1 L183,65.3 L185 70 Z" fill="#4a6a7a"/></svg>
<div style="position:absolute;left:1574px;top:419px;width:185px;height:1px;background:#3a3a3a"></div>
<div style="position:absolute;left:1574px;top:439px;width:185px;height:3px;background:#3a3a3a"></div>
<div style="position:absolute;left:1612px;top:447px;width:147px;height:20px;border-top:1px solid #3f3f3f;border-bottom:3px solid #4a4a4a"></div>
<div style="position:absolute;left:1612px;top:447px;width:1px;height:20px;background:#3f3f3f"></div>
<div style="position:absolute;left:1648px;top:447px;width:1px;height:20px;background:#3f3f3f"></div>
<div style="position:absolute;left:1724px;top:447px;width:1px;height:20px;background:#3f3f3f"></div>
<div class="t " style="left:1620px;top:449.8px;font-size:12px;line-height:14.4px;color:#c8c8c8;font-weight:normal;">事件</div>
<div class="t " style="left:1656px;top:449.8px;font-size:12px;line-height:14.4px;color:#c8c8c8;font-weight:normal;">内存使用率</div>
<div class="t " style="left:1728px;top:449.8px;font-size:12px;line-height:14.4px;color:#c8c8c8;font-weight:normal;">CPU 使用率</div>
<div style="position:absolute;left:1574px;top:491px;width:185px;height:1px;background:#333"></div>
<div class="t " style="left:1607px;top:498.8px;font-size:12px;line-height:14.4px;color:#e8e8e8;font-weight:normal;">所有事件(0 个，共 0 个)</div>
<div style="position:absolute;left:1574px;top:519px;width:185px;height:1px;background:#333"></div>
<div class="t " style="left:1606px;top:523.8px;font-size:12px;line-height:14.4px;color:#ffffff;font-weight:bold;">使用率</div>
<div style="position:absolute;left:1574px;top:542px;width:185px;height:1px;background:#333"></div>
<div class="t " style="left:1607px;top:548.8px;font-size:12px;line-height:14.4px;color:#e8e8e8;font-weight:normal;">截取快照</div>
<div style="position:absolute;left:1574px;top:569px;width:185px;height:1px;background:#333"></div>
<div class="t " style="left:1613px;top:573.8px;font-size:12px;line-height:14.4px;color:#ffffff;font-weight:bold;">使用率</div>
<div style="position:absolute;left:1574px;top:592px;width:185px;height:1px;background:#333"></div>
<div class="t " style="left:1607px;top:598.8px;font-size:12px;line-height:14.4px;color:#e8e8e8;font-weight:normal;">记录 CPU 配置文件</div>
<div style="position:absolute;left:1574px;top:656px;width:185px;height:1px;background:#333"></div>
<div style="position:absolute;left:1574px;top:663px;width:185px;height:1px;background:#333"></div>
<div style="position:absolute;left:1574px;top:734px;width:185px;height:1px;background:#333"></div>
<div style="position:absolute;left:634px;top:183px;width:978px;height:784px;box-shadow:0 6px 26px rgba(0,0,0,0.55);border-radius:8px"></div>
<div style="position:absolute;left:634px;top:183px;width:978px;height:784px;border-radius:8px;overflow:hidden;background:#0066cc">
<div style="position:absolute;left:0px;top:0px;width:978px;height:30px;background:#edf3f6"></div>
<svg style="position:absolute;left:9px;top:7px;" width="14" height="14" viewBox="0 0 14 14"><defs><linearGradient id="ig" x1="0" y1="0" x2="0" y2="1"><stop offset="0" stop-color="#2ec0f0"/><stop offset="1" stop-color="#4858b8"/></linearGradient></defs><circle cx="7" cy="7" r="6.6" fill="url(#ig)"/><path d="M4 11.5 L7 3 L10 11.5 M2.5 8 H11.5" fill="none" stroke="#fff" stroke-width="1.1"/></svg>
<div class="t " style="left:30px;top:7.8px;font-size:12px;line-height:14.4px;color:#000000;font-weight:normal;">Form1</div>
<div style="position:absolute;left:860px;top:14px;width:9px;height:1px;background:#222"></div>
<svg style="position:absolute;left:903px;top:8px;" width="12" height="12" viewBox="0 0 12 12"><rect x="1" y="1" width="10" height="10" fill="none" stroke="#222" stroke-width="1.1"/></svg>
<svg style="position:absolute;left:949px;top:8px;" width="12" height="12" viewBox="0 0 12 12"><path d="M1 1 L11 11 M11 1 L1 11" stroke="#222" stroke-width="1.1"/></svg>
<svg style="position:absolute;left:36px;top:63px;" width="56" height="56" viewBox="0 0 56 56"><defs><linearGradient id="lg" x1="0" y1="0" x2="1" y2="0"><stop offset="0" stop-color="#66e6b8"/><stop offset="1" stop-color="#dcf0ac"/></linearGradient></defs>
<circle cx="28" cy="28" r="28" fill="url(#lg)"/>
<path d="M38.7 3.7 C34 12 24 15 16 20 C8 24 3 30 3.7 37 C4.5 42 7 45 9.8 46.5 C11 41 13 37 16 34.5 C22 30 30 27 35 22 C40 17 41 10 38.7 3.7 Z" fill="#0a2aa6"/>
<path d="M43.6 6.9 C45 14 43 22 37 27 C31 32 24 35 21 40 C20 44 23 47 26 47 C30 47 32 44 32.6 42.4 C34 46 33 51 28 54.5 C22 56 16 54 14.5 50 C13 45 15 40 20 36 C26 31 34 27 39 22 C43 17 44 12 43.6 6.9 Z" fill="#0a2aa6"/></svg>
<div class="t " style="left:116px;top:70.4px;font-size:31px;line-height:37.2px;color:#ffffff;font-weight:bold;-webkit-text-stroke:1.5px #fff;text-shadow:2.5px 2.5px 0 #4444e0,1.5px 1.5px 0 #4444e0;letter-spacing:2.7px">喷涂工艺温湿度上位机控制系统</div>
<div style="position:absolute;left:647px;top:64px;width:96px;height:43px;background:#00ea00;border-radius:22px;box-shadow:inset 0 0 0 1.5px #00c800"></div>
<div style="position:absolute;left:703px;top:66px;width:40px;height:40px;background:#ffffff;border-radius:50%"></div>
<svg style="position:absolute;left:654px;top:75px;" width="22" height="22" viewBox="0 0 22 22"><circle cx="11" cy="11" r="9.8" fill="none" stroke="#fff" stroke-width="2"/></svg>
<div class="t " style="left:769px;top:74.6px;font-size:19px;line-height:22.8px;color:#000000;font-weight:bold;letter-spacing:1px">连接成功</div>
<div style="position:absolute;left:874px;top:66px;width:91px;height:38px;background:#fdfdfd;border:1px solid #d8d8d8;border-radius:4px;box-sizing:border-box"></div>
<div class="t " style="left:906px;top:77.2px;font-size:13px;line-height:15.6px;color:#000000;font-weight:normal;">保存</div>
<div style="position:absolute;left:42px;top:138px;width:596px;height:620px;background:#ffffff;border:1px solid #8c8c8c;box-sizing:border-box"></div>
<div style="position:absolute;left:42px;top:138px;width:596px;height:31px;background:linear-gradient(90deg,#84e084,#33cc33);border:1px solid #8c8c8c;box-sizing:border-box"></div>
<div class="t " style="left:270px;top:145.2px;font-size:13px;line-height:15.6px;color:#111111;font-weight:normal;">温湿度采集可视化设备</div>
<svg style="position:absolute;left:36px;top:167px;" width="350" height="210" viewBox="0 0 350 210"><path d="M20.00 183.00 A156 156 0 0 1 49.79 91.31" fill="none" stroke="#ff1010" stroke-width="2.8" stroke-dasharray="15 2.5"/><path d="M302.21 91.31 A156 156 0 0 1 332.00 183.00" fill="none" stroke="#ff1010" stroke-width="2.8" stroke-dasharray="15 2.5"/><path d="M24.00 185.00 L29.00 185.90 L40.00 183.00 L29.00 180.10 L24.00 181.00 Z" fill="#138a13"/><path d="M27.46 171.31 L33.44 171.78" stroke="#138a13" stroke-width="3.2"/><path d="M28.83 159.69 L34.76 160.63" stroke="#138a13" stroke-width="3.2"/><path d="M31.12 148.22 L36.95 149.62" stroke="#138a13" stroke-width="3.2"/><path d="M34.29 136.96 L40.00 138.81" stroke="#138a13" stroke-width="3.2"/><path d="M38.34 125.98 L43.89 128.28" stroke="#138a13" stroke-width="3.2"/><path d="M43.24 115.36 L48.59 118.08" stroke="#138a13" stroke-width="3.2"/><path d="M48.96 105.15 L54.07 108.28" stroke="#138a13" stroke-width="3.2"/><path d="M55.46 95.42 L60.31 98.95" stroke="#138a13" stroke-width="3.2"/><path d="M62.70 86.23 L67.26 90.13" stroke="#138a13" stroke-width="3.2"/><path d="M67.11 76.93 L70.00 81.11 L79.83 86.83 L74.11 77.00 L69.93 74.11 Z" fill="#138a13"/><path d="M79.23 69.70 L83.13 74.26" stroke="#138a13" stroke-width="3.2"/><path d="M88.42 62.46 L91.95 67.31" stroke="#138a13" stroke-width="3.2"/><path d="M98.15 55.96 L101.28 61.07" stroke="#138a13" stroke-width="3.2"/><path d="M108.36 50.24 L111.08 55.59" stroke="#138a13" stroke-width="3.2"/><path d="M118.98 45.34 L121.28 50.89" stroke="#138a13" stroke-width="3.2"/><path d="M129.96 41.29 L131.81 47.00" stroke="#138a13" stroke-width="3.2"/><path d="M141.22 38.12 L142.62 43.95" stroke="#138a13" stroke-width="3.2"/><path d="M152.69 35.83 L153.63 41.76" stroke="#138a13" stroke-width="3.2"/><path d="M164.31 34.46 L164.78 40.44" stroke="#138a13" stroke-width="3.2"/><path d="M174.00 31.00 L173.10 36.00 L176.00 47.00 L178.90 36.00 L178.00 31.00 Z" fill="#138a13"/><path d="M187.69 34.46 L187.22 40.44" stroke="#138a13" stroke-width="3.2"/><path d="M199.31 35.83 L198.37 41.76" stroke="#138a13" stroke-width="3.2"/><path d="M210.78 38.12 L209.38 43.95" stroke="#138a13" stroke-width="3.2"/><path d="M222.04 41.29 L220.19 47.00" stroke="#138a13" stroke-width="3.2"/><path d="M233.02 45.34 L230.72 50.89" stroke="#138a13" stroke-width="3.2"/><path d="M243.64 50.24 L240.92 55.59" stroke="#138a13" stroke-width="3.2"/><path d="M253.85 55.96 L250.72 61.07" stroke="#138a13" stroke-width="3.2"/><path d="M263.58 62.46 L260.05 67.31" stroke="#138a13" stroke-width="3.2"/><path d="M272.77 69.70 L268.87 74.26" stroke="#138a13" stroke-width="3.2"/><path d="M282.07 74.11 L277.89 77.00 L272.17 86.83 L282.00 81.11 L284.89 76.93 Z" fill="#138a13"/><path d="M289.30 86.23 L284.74 90.13" stroke="#138a13" stroke-width="3.2"/><path d="M296.54 95.42 L291.69 98.95" stroke="#138a13" stroke-width="3.2"/><path d="M303.04 105.15 L297.93 108.28" stroke="#138a13" stroke-width="3.2"/><path d="M308.76 115.36 L303.41 118.08" stroke="#138a13" stroke-width="3.2"/><path d="M313.66 125.98 L308.11 128.28" stroke="#138a13" stroke-width="3.2"/><path d="M317.71 136.96 L312.00 138.81" stroke="#138a13" stroke-width="3.2"/><path d="M320.88 148.22 L315.05 149.62" stroke="#138a13" stroke-width="3.2"/><path d="M323.17 159.69 L317.24 160.63" stroke="#138a13" stroke-width="3.2"/><path d="M324.54 171.31 L318.56 171.78" stroke="#138a13" stroke-width="3.2"/><path d="M328.00 181.00 L323.00 180.10 L312.00 183.00 L323.00 185.90 L328.00 185.00 Z" fill="#138a13"/><path d="M171.94 186.56 L76.18 71.03 L78.14 69.32 L180.06 179.44 Z" fill="#ff0000"/><circle cx="176" cy="183" r="5.2" fill="#ff0000"/></svg>
<div class="t" style="left:51px;width:80px;text-align:center;top:341px;font-size:14px;line-height:18px;color:#111">0</div>
<div class="t" style="left:86px;width:80px;text-align:center;top:255px;font-size:14px;line-height:18px;color:#111">25</div>
<div class="t" style="left:172px;width:80px;text-align:center;top:220px;font-size:14px;line-height:18px;color:#111">50</div>
<div class="t" style="left:258px;width:80px;text-align:center;top:255px;font-size:14px;line-height:18px;color:#111">75</div>
<div class="t" style="left:293px;width:80px;text-align:center;top:341px;font-size:14px;line-height:18px;color:#111">100</div>
<div class="t" style="left:122px;width:200px;text-align:center;top:368px;font-size:32px;line-height:34px;color:#000;font-weight:bold;transform:scaleX(0.93)">27.1 °</div>
<div style="position:absolute;left:447px;top:199px;width:88px;height:161px;background:#e2e5ec;border-radius:3px;overflow:hidden"></div>
<svg style="position:absolute;left:447px;top:199px;border-radius:3px" width="88" height="161" viewBox="0 0 88 161"><path d="M0 84 C12 78 26 80 40 86 C54 92 68 88 88 82 L88 161 L0 161 Z" fill="#62c6c6"/>
<path d="M0 89 C16 96 30 94 46 88 C60 82 74 82 88 90 L88 161 L0 161 Z" fill="#22c0c0"/></svg>
<div class="t " style="left:478px;top:272.8px;font-size:12px;line-height:14.4px;color:rgba(255,255,255,0.85);font-weight:normal;">42%</div>
<div class="t" style="left:394px;width:200px;text-align:center;top:378px;font-size:32px;line-height:34px;color:#000;font-weight:bold;transform:scaleX(0.96)">42.7 %</div>
<div style="position:absolute;left:70px;top:437px;width:13px;height:13px;background:#1562c8;border-radius:2px"></div>
<svg style="position:absolute;left:70px;top:437px;" width="13" height="13" viewBox="0 0 13 13"><path d="M3.2 6.8 L5.5 9 L9.8 4.3" fill="none" stroke="#fff" stroke-width="1.2"/></svg>
<div class="t " style="left:90px;top:435.2px;font-size:13px;line-height:15.6px;color:#111;font-weight:normal;">自动控制</div>
<div class="t " style="left:166px;top:458.0px;font-size:20px;line-height:24.0px;color:#111;font-weight:normal;">加热:</div>
<div style="position:absolute;left:223px;top:456px;width:75px;height:27px;background:#00ee00;border-radius:14px;box-shadow:inset 0 0 0 1px #00c000"></div>
<div style="position:absolute;left:272px;top:457px;width:25px;height:25px;background:#fff;border-radius:50%"></div>
<svg style="position:absolute;left:226px;top:462px;" width="15" height="15" viewBox="0 0 15 15"><circle cx="7.5" cy="7.5" r="5.3" fill="none" stroke="#fff" stroke-width="2.3"/></svg>
<div class="t " style="left:432px;top:458.0px;font-size:20px;line-height:24.0px;color:#111;font-weight:normal;">通风:</div>
<div style="position:absolute;left:489px;top:456px;width:76px;height:27px;background:#daa520;border-radius:14px;box-shadow:inset 0 0 0 1px #c89018"></div>
<div style="position:absolute;left:489px;top:457px;width:25px;height:25px;background:#fff;border-radius:50%"></div>
<svg style="position:absolute;left:545px;top:462px;" width="15" height="15" viewBox="0 0 15 15"><circle cx="7.5" cy="7.5" r="5.3" fill="none" stroke="#fff" stroke-width="2.3"/></svg>
<div class="t " style="left:192px;top:716.4px;font-size:21px;line-height:25.2px;color:#000;font-weight:normal;">35°~45°</div>
<div class="t " style="left:473px;top:716.4px;font-size:21px;line-height:25.2px;color:#000;font-weight:normal;">40%~50%</div>
<svg style="position:absolute;left:56px;top:527px;" width="500" height="160" viewBox="0 0 500 160"><defs>
<linearGradient id="pipe" x1="0" y1="0" x2="0" y2="1"><stop offset="0" stop-color="#a8acb2"/><stop offset="0.45" stop-color="#eef0f2"/><stop offset="1" stop-color="#9a9ea4"/></linearGradient>
<linearGradient id="wall" x1="0" y1="0" x2="0" y2="1"><stop offset="0" stop-color="#e9a9a8"/><stop offset="1" stop-color="#e2a898"/></linearGradient>
<linearGradient id="side" x1="0" y1="0" x2="0" y2="1"><stop offset="0" stop-color="#c88080"/><stop offset="1" stop-color="#d4a490"/></linearGradient>
</defs>
<polygon points="276.0,87.0 365.0,87.0 406.0,62.0 460.0,62.0 460.0,88.0 406.0,88.0 365.0,105.0 276.0,105.0" fill="url(#pipe)"/>
<polygon points="276.0,111.0 365.0,111.0 406.0,102.0 460.0,99.0 460.0,125.0 406.0,130.0 365.0,130.0 276.0,130.0" fill="url(#pipe)"/>
<rect x="276" y="86" width="3" height="19" fill="#505458"/>
<rect x="276" y="111" width="3" height="19" fill="#505458"/>
<rect x="404" y="57" width="3" height="74" fill="#62666a"/>
<polygon points="441.0,122.0 472.0,122.0 482.0,142.0 433.0,142.0" fill="#d2d8e0"/>
<rect x="428" y="142" width="59" height="4" fill="#a0a6ae"/>
<circle cx="457" cy="94" r="31.5" fill="#c2c6ce"/>
<circle cx="457" cy="94" r="25" fill="#cdd1d8"/>
<circle cx="457" cy="94" r="8" fill="#9aa0a8"/>
<circle cx="457" cy="94" r="1.6" fill="none" stroke="#eee" stroke-width="0.8"/>
<path d="M469.0 94.0 L479.0 94.0" stroke="#5a6068" stroke-width="2.6"/><path d="M465.5 102.5 L472.6 109.6" stroke="#5a6068" stroke-width="2.6"/><path d="M457.0 106.0 L457.0 116.0" stroke="#5a6068" stroke-width="2.6"/><path d="M448.5 102.5 L441.4 109.6" stroke="#5a6068" stroke-width="2.6"/><path d="M445.0 94.0 L435.0 94.0" stroke="#5a6068" stroke-width="2.6"/><path d="M448.5 85.5 L441.4 78.4" stroke="#5a6068" stroke-width="2.6"/><path d="M457.0 82.0 L457.0 72.0" stroke="#5a6068" stroke-width="2.6"/><path d="M465.5 85.5 L472.6 78.4" stroke="#5a6068" stroke-width="2.6"/>
<rect x="4" y="140" width="285" height="8" fill="#c0a282"/>
<rect x="16" y="129" width="238" height="11" fill="#cea28e"/>
<rect x="254" y="72" width="23" height="68" fill="url(#side)"/>
<rect x="259" y="63" width="22" height="9" fill="#e8424a"/>
<rect x="34" y="52" width="53" height="8" fill="#c03232"/>
<polygon points="39.0,60.0 87.0,60.0 87.0,123.0 39.0,123.0" fill="#cf8a8a"/>
<polygon points="30.0,101.0 104.0,47.0 254.0,47.0 254.0,129.0 30.0,129.0" fill="url(#wall)"/>
<polygon points="180.0,47.0 254.0,90.0 254.0,129.0 180.0,90.0 120.0,60.0 104.0,60.0" fill="#dfa09e" opacity="0.7"/>
<polygon points="120.0,90.0 180.0,129.0 120.0,129.0" fill="#d8a090" opacity="0.6"/>
<rect x="248" y="47" width="6" height="52" fill="#c07a7a"/>
<rect x="30" y="123" width="64" height="6" fill="#ffd0c0"/>
<polygon points="25.0,96.0 104.0,39.0 262.0,39.0 262.0,47.0 106.0,47.0 25.0,103.0" fill="#e8484c"/>
<rect x="176" y="35" width="79" height="4" fill="#c99484"/>
<rect x="206" y="17" width="10" height="18" fill="#d6ac98"/>
<rect x="216" y="17" width="9" height="18" fill="#b88670"/>
<rect x="197" y="7" width="37" height="10" fill="#e2684c"/>
<rect x="197" y="11" width="37" height="1" fill="#c85a40"/>
<rect x="92" y="66" width="31" height="5" fill="#8a4c4c"/>
<rect x="182" y="66" width="31" height="5" fill="#8a4c4c"/>
<rect x="50" y="94" width="10" height="11" fill="#8a4c4c"/>
<rect x="67" y="94" width="10" height="11" fill="#8a4c4c"/>
<rect x="138" y="73" width="7.5" height="7.5" fill="#8a4c4c"/><rect x="147.5" y="73" width="7.5" height="7.5" fill="#8a4c4c"/>
<rect x="138" y="82.5" width="7.5" height="7.5" fill="#8a4c4c"/><rect x="147.5" y="82.5" width="7.5" height="7.5" fill="#8a4c4c"/>
<rect x="138" y="97" width="7.5" height="7.5" fill="#b87070"/><rect x="147.5" y="97" width="7.5" height="7.5" fill="#8a4c4c"/>
<rect x="138" y="106.5" width="7.5" height="7.5" fill="#b87070"/><rect x="147.5" y="106.5" width="7.5" height="7.5" fill="#b87070"/>
<rect x="92" y="88" width="31" height="6" fill="#e8424a"/>
<rect x="95" y="94" width="26" height="35" fill="#8a5048"/>
<rect x="116" y="96" width="5" height="33" fill="#6e3a36"/>
<rect x="95" y="129" width="26" height="5" fill="#ffd0c0"/>
<rect x="92" y="134" width="31" height="6" fill="#e4b4a0"/>
<rect x="182" y="88" width="31" height="6" fill="#e8424a"/>
<rect x="184" y="94" width="26" height="35" fill="#8a5048"/>
<rect x="184" y="129" width="26" height="5" fill="#ffd0c0"/>
<rect x="182" y="134" width="31" height="6" fill="#e4b4a0"/>
<rect x="38" y="21" width="3" height="127" fill="#b68676"/>
<rect x="38" y="21" width="20" height="4" fill="#b68676"/>
</svg>
<div style="position:absolute;left:644px;top:138px;width:291px;height:293px;background:#f3f6fb;border:1px solid #8c8c8c;box-sizing:border-box"></div>
<div style="position:absolute;left:644px;top:138px;width:291px;height:31px;background:linear-gradient(90deg,#94e694,#44cc44);border:1px solid #8c8c8c;box-sizing:border-box"></div>
<div class="t " style="left:762px;top:145.2px;font-size:13px;line-height:15.6px;color:#111;font-weight:normal;">新阁教育</div>
<div class="t" style="left:636px;width:101px;text-align:right;top:188px;font-size:13.6px;line-height:18px;color:#111">站地址:</div>
<div style="position:absolute;left:747px;top:186px;width:133px;height:26px;background:#ffffff;border:1px solid #dcdcdc;border-bottom:1px solid #808080;border-radius:2px;box-sizing:border-box"></div>
<div class="t " style="left:751px;top:190.6px;font-size:14px;line-height:16.8px;color:#111;font-weight:normal;">1</div>
<div class="t" style="left:636px;width:101px;text-align:right;top:228px;font-size:13.6px;line-height:18px;color:#111">串口号:</div>
<div style="position:absolute;left:747px;top:223px;width:133px;height:27px;background:#fbfbfb;border:1px solid #c6c6c6;border-radius:2px;box-sizing:border-box"></div>
<svg style="position:absolute;left:865px;top:233px;" width="11" height="7" viewBox="0 0 11 7"><path d="M1 1 L5.5 5.5 L10 1" fill="none" stroke="#444" stroke-width="1"/></svg>
<div class="t " style="left:751px;top:228.6px;font-size:14px;line-height:16.8px;color:#111;font-weight:normal;">COM5</div>
<div class="t" style="left:636px;width:101px;text-align:right;top:267px;font-size:13.6px;line-height:18px;color:#111">波特率:</div>
<div style="position:absolute;left:747px;top:262px;width:133px;height:27px;background:#fbfbfb;border:1px solid #c6c6c6;border-radius:2px;box-sizing:border-box"></div>
<svg style="position:absolute;left:865px;top:272px;" width="11" height="7" viewBox="0 0 11 7"><path d="M1 1 L5.5 5.5 L10 1" fill="none" stroke="#444" stroke-width="1"/></svg>
<div class="t " style="left:751px;top:267.6px;font-size:14px;line-height:16.8px;color:#111;font-weight:normal;">9600</div>
<div class="t" style="left:636px;width:101px;text-align:right;top:306px;font-size:13.6px;line-height:18px;color:#111">校验位:</div>
<div style="position:absolute;left:747px;top:301px;width:133px;height:27px;background:#fbfbfb;border:1px solid #c6c6c6;border-radius:2px;box-sizing:border-box"></div>
<svg style="position:absolute;left:865px;top:311px;" width="11" height="7" viewBox="0 0 11 7"><path d="M1 1 L5.5 5.5 L10 1" fill="none" stroke="#444" stroke-width="1"/></svg>
<div class="t " style="left:751px;top:306.6px;font-size:14px;line-height:16.8px;color:#111;font-weight:normal;">None</div>
<div class="t" style="left:636px;width:101px;text-align:right;top:345px;font-size:13.6px;line-height:18px;color:#111">数据位:</div>
<div style="position:absolute;left:747px;top:340px;width:133px;height:27px;background:#fbfbfb;border:1px solid #c6c6c6;border-radius:2px;box-sizing:border-box"></div>
<svg style="position:absolute;left:865px;top:350px;" width="11" height="7" viewBox="0 0 11 7"><path d="M1 1 L5.5 5.5 L10 1" fill="none" stroke="#444" stroke-width="1"/></svg>
<div class="t " style="left:751px;top:345.6px;font-size:14px;line-height:16.8px;color:#111;font-weight:normal;">8</div>
<div class="t" style="left:636px;width:101px;text-align:right;top:384px;font-size:13.6px;line-height:18px;color:#111">停止位:</div>
<div style="position:absolute;left:747px;top:379px;width:133px;height:27px;background:#fbfbfb;border:1px solid #c6c6c6;border-radius:2px;box-sizing:border-box"></div>
<svg style="position:absolute;left:865px;top:389px;" width="11" height="7" viewBox="0 0 11 7"><path d="M1 1 L5.5 5.5 L10 1" fill="none" stroke="#444" stroke-width="1"/></svg>
<div class="t " style="left:751px;top:384.6px;font-size:14px;line-height:16.8px;color:#111;font-weight:normal;">One</div>
<div style="position:absolute;left:645px;top:440px;width:291px;height:321px;background:#f3f6fb;border:1px solid #8c8c8c;box-sizing:border-box"></div>
<div style="position:absolute;left:645px;top:440px;width:291px;height:31px;background:linear-gradient(90deg,#94e694,#44cc44);border:1px solid #8c8c8c;box-sizing:border-box"></div>
<div class="t " style="left:762px;top:447.2px;font-size:13px;line-height:15.6px;color:#111;font-weight:normal;">新阁教育</div>
<div style="position:absolute;left:648px;top:601px;width:287px;height:1px;background:#808080"></div>
<div class="t" style="left:636px;width:101px;text-align:right;top:490px;font-size:13.6px;line-height:18px;color:#111">温度上限:</div>
<div style="position:absolute;left:748px;top:487px;width:109px;height:25px;background:#ffffff;border:1px solid #a8a8a8;box-sizing:border-box"></div>
<div style="position:absolute;left:840px;top:489px;width:15px;height:21px;background:#fafafa;border:1px solid #d8d8d8;box-sizing:border-box"></div>
<svg style="position:absolute;left:843px;top:492px;" width="9" height="16" viewBox="0 0 9 16"><path d="M1 5 L4.5 1 L8 5 Z M1 11 L4.5 15 L8 11 Z" fill="#222"/></svg>
<div class="t " style="left:750px;top:491.1px;font-size:14px;line-height:16.8px;color:#111;font-weight:normal;">45.0</div>
<div class="t" style="left:636px;width:101px;text-align:right;top:525px;font-size:13.6px;line-height:18px;color:#111">温度下限:</div>
<div style="position:absolute;left:748px;top:523px;width:109px;height:25px;background:#ffffff;border:1px solid #a8a8a8;box-sizing:border-box"></div>
<div style="position:absolute;left:840px;top:525px;width:15px;height:21px;background:#fafafa;border:1px solid #d8d8d8;box-sizing:border-box"></div>
<svg style="position:absolute;left:843px;top:528px;" width="9" height="16" viewBox="0 0 9 16"><path d="M1 5 L4.5 1 L8 5 Z M1 11 L4.5 15 L8 11 Z" fill="#222"/></svg>
<div class="t " style="left:750px;top:527.1px;font-size:14px;line-height:16.8px;color:#111;font-weight:normal;">35.0</div>
<div class="t" style="left:636px;width:101px;text-align:right;top:555px;font-size:13.6px;line-height:18px;color:#111">报警温度:</div>
<div style="position:absolute;left:748px;top:555px;width:109px;height:25px;background:#ffffff;border:1px solid #a8a8a8;box-sizing:border-box"></div>
<div style="position:absolute;left:840px;top:557px;width:15px;height:21px;background:#fafafa;border:1px solid #d8d8d8;box-sizing:border-box"></div>
<svg style="position:absolute;left:843px;top:560px;" width="9" height="16" viewBox="0 0 9 16"><path d="M1 5 L4.5 1 L8 5 Z M1 11 L4.5 15 L8 11 Z" fill="#222"/></svg>
<div class="t " style="left:750px;top:559.1px;font-size:14px;line-height:16.8px;color:#111;font-weight:normal;">50.0</div>
<div class="t" style="left:636px;width:101px;text-align:right;top:628px;font-size:13.6px;line-height:18px;color:#111">湿度上限:</div>
<div style="position:absolute;left:748px;top:625px;width:109px;height:25px;background:#ffffff;border:1px solid #a8a8a8;box-sizing:border-box"></div>
<div style="position:absolute;left:840px;top:627px;width:15px;height:21px;background:#fafafa;border:1px solid #d8d8d8;box-sizing:border-box"></div>
<svg style="position:absolute;left:843px;top:630px;" width="9" height="16" viewBox="0 0 9 16"><path d="M1 5 L4.5 1 L8 5 Z M1 11 L4.5 15 L8 11 Z" fill="#222"/></svg>
<div class="t " style="left:750px;top:629.1px;font-size:14px;line-height:16.8px;color:#111;font-weight:normal;">50.0</div>
<div class="t" style="left:636px;width:101px;text-align:right;top:664px;font-size:13.6px;line-height:18px;color:#111">湿度下限:</div>
<div style="position:absolute;left:748px;top:657px;width:109px;height:25px;background:#ffffff;border:1px solid #a8a8a8;box-sizing:border-box"></div>
<div style="position:absolute;left:840px;top:659px;width:15px;height:21px;background:#fafafa;border:1px solid #d8d8d8;box-sizing:border-box"></div>
<svg style="position:absolute;left:843px;top:662px;" width="9" height="16" viewBox="0 0 9 16"><path d="M1 5 L4.5 1 L8 5 Z M1 11 L4.5 15 L8 11 Z" fill="#222"/></svg>
<div class="t " style="left:750px;top:661.1px;font-size:14px;line-height:16.8px;color:#111;font-weight:normal;">40.0</div>
<div class="t" style="left:636px;width:101px;text-align:right;top:696px;font-size:13.6px;line-height:18px;color:#111">湿度报警:</div>
<div style="position:absolute;left:748px;top:693px;width:109px;height:25px;background:#ffffff;border:1px solid #a8a8a8;box-sizing:border-box"></div>
<div style="position:absolute;left:840px;top:695px;width:15px;height:21px;background:#fafafa;border:1px solid #d8d8d8;box-sizing:border-box"></div>
<svg style="position:absolute;left:843px;top:698px;" width="9" height="16" viewBox="0 0 9 16"><path d="M1 5 L4.5 1 L8 5 Z M1 11 L4.5 15 L8 11 Z" fill="#222"/></svg>
<div class="t " style="left:750px;top:697.1px;font-size:14px;line-height:16.8px;color:#111;font-weight:normal;">60.0</div>
</div>
</body></html>
